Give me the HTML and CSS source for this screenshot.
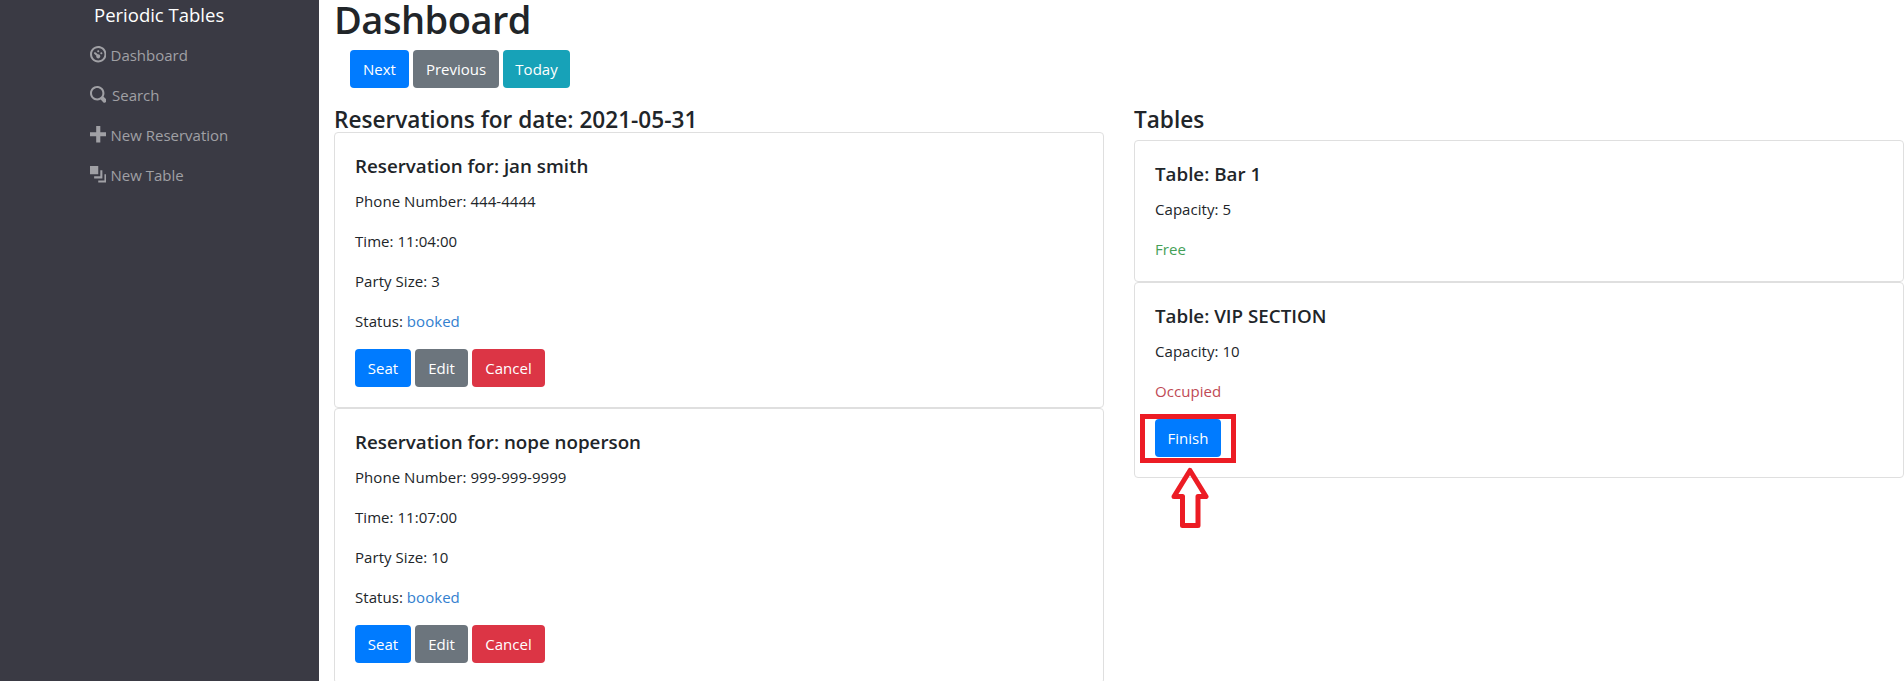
FILE: index.html
```html
<!DOCTYPE html>
<html lang="en">
<head>
<meta charset="utf-8">
<title>Periodic Tables</title>
<link rel="stylesheet" href="styles.css">
</head>
<body>
<div class="layout">
  <nav class="sidebar">
    <a class="brand">Periodic Tables</a>
    <ul class="nav">
      <li class="nav-item"><svg class="icon" viewBox="0 0 8 8"><path d="M4 0c-2.2 0-4 1.8-4 4s1.8 4 4 4 4-1.8 4-4-1.8-4-4-4zm0 1c1.66 0 3 1.34 3 3s-1.34 3-3 3-3-1.34-3-3 1.34-3 3-3zm0 1c-.28 0-.5.22-.5.5s.22.5.5.5.5-.22.5-.5-.22-.5-.5-.5zm-1.66 1a.5.5 0 0 0-.19.84l.91.91c-.02.08-.06.16-.06.25 0 .55.45 1 1 1s1-.45 1-1-.45-1-1-1c-.09 0-.17.04-.25.06l-.91-.91a.5.5 0 0 0-.5-.15zm3.16 0c-.28 0-.5.22-.5.5s.22.5.5.5.5-.22.5-.5-.22-.5-.5-.5z"/></svg><span>Dashboard</span></li>
      <li class="nav-item"><svg class="icon" viewBox="0 0 8 8"><path d="M3.500 0c-1.930 0-3.500 1.570-3.500 3.500s1.570 3.500 3.500 3.500c.59 0 1.170-.14 1.660-.41a1 1 0 0 0 .13.13l1 1a1.020 1.020 0 1 0 1.440-1.440l-1-1a1 1 0 0 0-.16-.13c.27-.49.44-1.060.44-1.660 0-1.930-1.550-3.500-3.500-3.500zm0 1c1.390 0 2.500 1.110 2.500 2.500 0 .66-.24 1.270-.66 1.720l-.03.03a1 1 0 0 0-.13.13c-.44.4-1.040.63-1.690.63-1.390 0-2.500-1.110-2.500-2.500s1.110-2.500 2.500-2.500z"/></svg><span class="search-label">Search</span></li>
      <li class="nav-item"><svg class="icon" viewBox="0 0 8 8"><path d="M3 0v3h-3v2h3v3h2v-3h3v-2h-3v-3h-2z"/></svg><span>New Reservation</span></li>
      <li class="nav-item"><svg class="icon" viewBox="0 0 8 8"><path d="M0 0v4h4v-4h-4zm5 2v3h-3v1h4v-4h-1zm2 2v3h-3v1h4v-4h-1z"/></svg><span>New Table</span></li>
    </ul>
  </nav>
  <main class="main">
    <h1 class="title">Dashboard</h1>
    <div class="pager">
      <button class="btn primary w-next">Next</button>
      <button class="btn secondary w-prev">Previous</button>
      <button class="btn info w-today">Today</button>
    </div>
    <div class="columns">
      <section class="column">
        <h4 class="heading">Reservations for date: 2021-05-31</h4>
        <article class="card">
          <h5 class="card-title">Reservation for: jan smith</h5>
          <p class="text">Phone Number: 444-4444</p>
          <p class="text">Time: 11:04:00</p>
          <p class="text">Party Size: 3</p>
          <p class="text">Status: <span class="booked">booked</span></p>
          <div class="actions">
            <button class="btn primary w-seat">Seat</button>
            <button class="btn secondary w-edit">Edit</button>
            <button class="btn danger w-cancel">Cancel</button>
          </div>
        </article>
        <article class="card">
          <h5 class="card-title">Reservation for: nope noperson</h5>
          <p class="text">Phone Number: 999-999-9999</p>
          <p class="text">Time: 11:07:00</p>
          <p class="text">Party Size: 10</p>
          <p class="text">Status: <span class="booked">booked</span></p>
          <div class="actions">
            <button class="btn primary w-seat">Seat</button>
            <button class="btn secondary w-edit">Edit</button>
            <button class="btn danger w-cancel">Cancel</button>
          </div>
        </article>
      </section>
      <section class="column">
        <h4 class="heading spaced">Tables</h4>
        <article class="card">
          <h5 class="card-title">Table: Bar 1</h5>
          <p class="text">Capacity: 5</p>
          <p class="text free">Free</p>
        </article>
        <article class="card">
          <h5 class="card-title">Table: VIP SECTION</h5>
          <p class="text">Capacity: 10</p>
          <p class="text occupied">Occupied</p>
          <div class="actions">
            <div class="marked">
              <button class="btn primary w-finish">Finish</button>
              <div class="mark-box"></div>
              <svg class="mark-arrow" viewBox="0 0 38 62"><path d="M19 3.500 35 29.500H27V58.500H11.500V29.500H3Z"/></svg>
            </div>
          </div>
        </article>
      </section>
    </div>
  </main>
</div>
</body>
</html>
```
FILE: styles.css
```css
* { box-sizing: border-box; }
body {
  margin: 0;
  overflow: hidden;
  background: #fff;
  color: #212529;
  font-family: "Open Sans", "Noto Sans", sans-serif;
  font-size: 15px;
  line-height: 24px;
}
h1, h4, h5, p, ul { margin: 0; padding: 0; font-weight: 550; }
p { font-weight: 400; letter-spacing: 0.05px; }
.layout { display: flex; height: 681px; overflow: hidden; }
.sidebar { width: 319px; flex: none; background: #3a3a44; color: #a0a0a5; }
.brand { display: block; padding: 0 0 0 94px; height: 43px; font-size: 18.500px; line-height: 30px; color: #fff; }
.nav { list-style: none; font-weight: 400; }
.nav-item { display: flex; height: 40px; padding-left: 89.500px; gap: 4.500px; }
.icon { width: 16.500px; height: 16.500px; margin-top: 3px; fill: #a0a0a5; flex: none; }
.search-label { padding-left: 1.500px; }
.main { flex: 1; min-width: 0; padding-left: 15px; }
.title { height: 50px; font-size: 38px; letter-spacing: -0.5px; line-height: 39px; }
.pager { display: flex; gap: 4px; padding-left: 16px; height: 53.400px; }
.btn {
  height: 38px;
  padding: 0;
  border: 0;
  border-radius: 4px;
  color: #fff;
  font: inherit;
  text-align: center;
}
.primary { background: #007bff; }
.secondary { background: #6c757d; }
.info { background: #17a2b8; }
.danger { background: #dc3545; }
.w-next { width: 59px; }
.w-prev { width: 86px; }
.w-today { width: 67px; }
.w-seat { width: 56px; }
.w-edit { width: 53px; }
.w-cancel { width: 73px; }
.w-finish { width: 66px; }
.columns { display: grid; grid-template-columns: 1fr 1fr; gap: 30px; }
.heading { height: 28.800px; font-size: 22.600px; line-height: 33px; }
.spaced { margin-bottom: 8px; }
.card { padding: 20px; border: 1px solid #dfdfdf; border-radius: 4px; }
.card-title { height: 24px; margin-bottom: 12px; font-size: 18.750px; line-height: 26px; }
.text + .text { margin-top: 16px; }
.booked { color: #3380cf; }
.free { color: #45a058; }
.occupied { color: #c04a55; }
.actions { display: flex; gap: 4px; margin-top: 16px; }
.marked { position: relative; height: 38px; }
.mark-box { position: absolute; left: -15px; top: -5px; width: 96px; height: 49px; border: 5px solid #ec1c24; }
.mark-arrow { position: absolute; left: 15.500px; top: 48px; width: 38px; height: 62px; fill: none; stroke: #ec1c24; stroke-width: 5; stroke-linejoin: round; }
```
